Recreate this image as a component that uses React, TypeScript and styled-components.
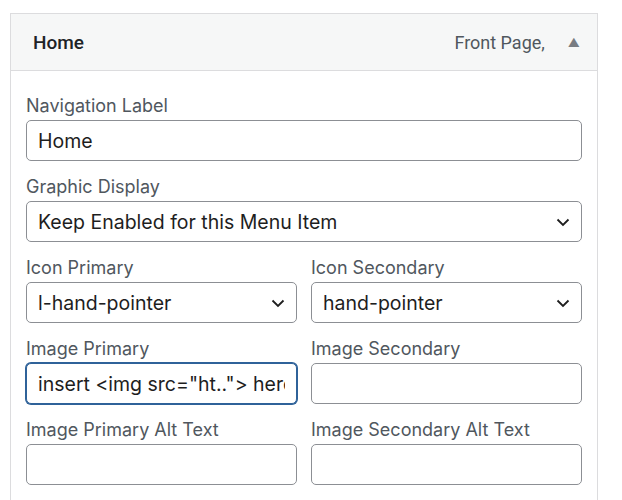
import React from "react";
import styled, { createGlobalStyle } from "styled-components";

const Global = createGlobalStyle`
  body {
    margin: 0;
    background: #ffffff;
    font-family: Inter, "Liberation Sans", sans-serif;
  }
`;

const Panel = styled.div`
  margin: 13px 0 0 10px;
  width: 588px;
  border: 1px solid #dcdcde;
  box-sizing: border-box;
  background: #ffffff;
`;

const Header = styled.div`
  display: flex;
  align-items: center;
  height: 57px;
  padding: 0 17px 0 22px;
  background: #f6f7f7;
  border-bottom: 1px solid #dcdcde;
  box-sizing: border-box;
`;

const Title = styled.div`
  flex: 1;
  font-family: Roboto, "Liberation Sans", sans-serif;
  font-weight: 500;
  font-size: 19px;
  color: #1d2327;
`;

const Meta = styled.div`
  font-family: Roboto, "Liberation Sans", sans-serif;
  font-size: 18px;
  color: #50575e;
`;

const Arrow = styled.span`
  margin-left: 23px;
  font-size: 12px;
  color: #787c82;
`;

const Body = styled.div`
  padding: 24px 15px 20px 15px;
  display: flex;
  flex-direction: column;
  gap: 15px;
`;

const Row = styled.div`
  display: grid;
  grid-template-columns: minmax(0, 1fr) minmax(0, 1fr);
  column-gap: 14px;
`;

const Field = styled.div`
  display: flex;
  flex-direction: column;
  min-width: 0;
`;

const Label = styled.label`
  font-size: 18px;
  line-height: 22px;
  color: #50575e;
  margin-bottom: 3px;
`;

const TextInput = styled.input<{ $focused?: boolean }>`
  width: 100%;
  min-width: 0;
  height: 41px;
  box-sizing: border-box;
  border: 1px solid ${(p) => (p.$focused ? "#2f6299" : "#8c8f94")};
  box-shadow: ${(p) => (p.$focused ? "0 0 0 1px #2f6299" : "none")};
  border-radius: 5px;
  padding: 0 11px;
  font-family: inherit;
  font-size: 19.5px;
  color: #1e1e1e;
  background: #fff;
  outline: none;
`;

const SelectWrap = styled.div`
  position: relative;
`;

const Select = styled.select`
  width: 100%;
  height: 41px;
  box-sizing: border-box;
  border: 1px solid #8c8f94;
  border-radius: 5px;
  padding: 0 40px 0 11px;
  font-family: inherit;
  font-size: 19.5px;
  color: #1e1e1e;
  background: #fff;
  appearance: none;
  outline: none;
`;

const Chevron = styled.svg`
  position: absolute;
  right: 11px;
  top: 50%;
  transform: translateY(-50%);
  pointer-events: none;
`;

function Dropdown({ value }: { value: string }) {
  return (
    <SelectWrap>
      <Select defaultValue={value}>
        <option>{value}</option>
      </Select>
      <Chevron width="16" height="16" viewBox="0 0 16 16">
        <path d="M2.5 5.5 L8 11 L13.5 5.5" fill="none" stroke="#1e1e1e" strokeWidth="1.8" />
      </Chevron>
    </SelectWrap>
  );
}

export default function App() {
  return (
    <>
      <Global />
      <Panel>
        <Header>
          <Title>Home</Title>
          <Meta>Front Page,</Meta>
          <Arrow>▲</Arrow>
        </Header>
        <Body>
          <Field>
            <Label>Navigation Label</Label>
            <TextInput readOnly value="Home" />
          </Field>
          <Field>
            <Label>Graphic Display</Label>
            <Dropdown value="Keep Enabled for this Menu Item" />
          </Field>
          <Row>
            <Field>
              <Label>Icon Primary</Label>
              <Dropdown value="l-hand-pointer" />
            </Field>
            <Field>
              <Label>Icon Secondary</Label>
              <Dropdown value="hand-pointer" />
            </Field>
          </Row>
          <Row>
            <Field>
              <Label>Image Primary</Label>
              <TextInput $focused readOnly value={'insert <img src="ht.."> here'} />
            </Field>
            <Field>
              <Label>Image Secondary</Label>
              <TextInput readOnly value="" />
            </Field>
          </Row>
          <Row>
            <Field>
              <Label>Image Primary Alt Text</Label>
              <TextInput readOnly value="" />
            </Field>
            <Field>
              <Label>Image Secondary Alt Text</Label>
              <TextInput readOnly value="" />
            </Field>
          </Row>
        </Body>
      </Panel>
    </>
  );
}
